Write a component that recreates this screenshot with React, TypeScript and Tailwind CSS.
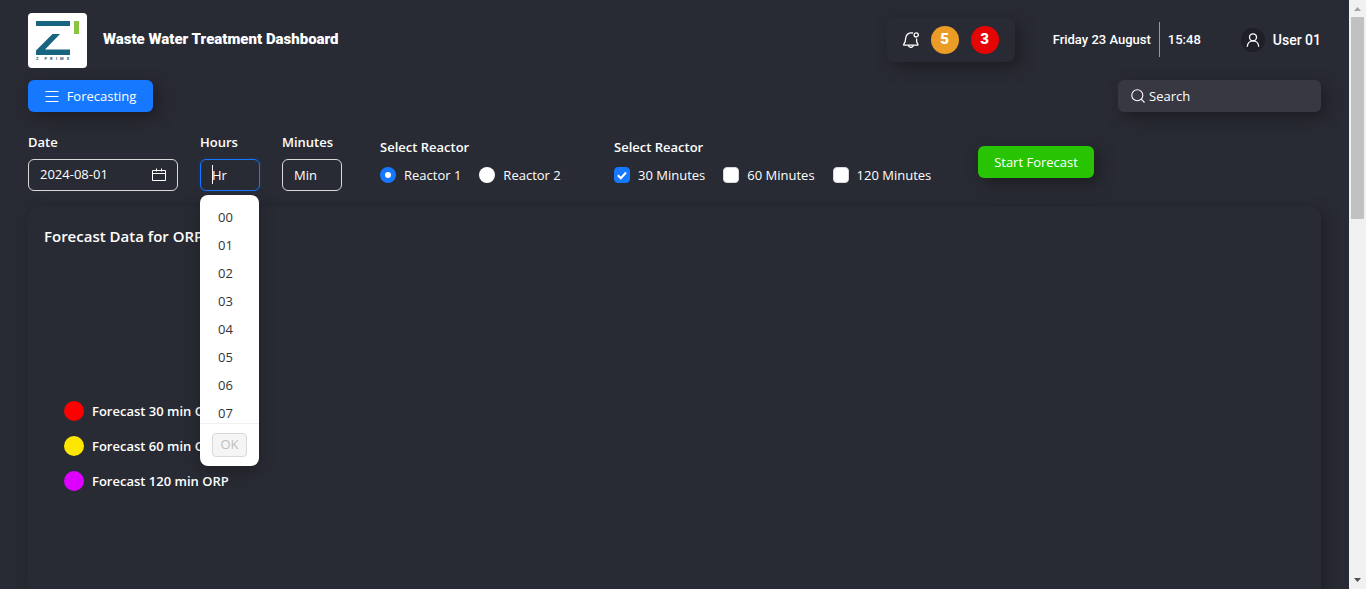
import { useState } from "react";

const hours = ["00", "01", "02", "03", "04", "05", "06", "07"];

const legend = [
  { label: "Forecast 30 min ORP", dot: "bg-[#ff0000]" },
  { label: "Forecast 60 min ORP", dot: "bg-[#ffe600]" },
  { label: "Forecast 120 min ORP", dot: "bg-[#dd00ff]" },
];

const softShadow = "shadow-[5px_5px_15px_rgba(28,28,32,0.9)]";

function Logo() {
  return (
    <div className="h-[55px] w-[59px] rounded bg-white">
      <svg viewBox="0 0 59 55" className="h-full w-full" role="img" aria-label="Z Prime">
        <path fill="#17657f" d="M8 8h34v5H8zM24.500 21H32L17 36.500h25V42H8v-4.500z" />
        <path fill="#8bc540" d="M46 8h5v13h-5z" />
        <text y="47" fill="#17657f" fontSize="4" fontWeight="800">
          <tspan x="8">Z</tspan>
          <tspan x="16.500">P</tspan>
          <tspan x="22">R</tspan>
          <tspan x="28">I</tspan>
          <tspan x="32">M</tspan>
          <tspan x="39">E</tspan>
        </text>
      </svg>
    </div>
  );
}

function MenuIcon() {
  return (
    <svg viewBox="0 0 14 14" className="size-3.5 shrink-0" fill="none" stroke="currentColor">
      <path d="M.5 2.500h13M.5 7.500h13M.5 12.500h13" />
    </svg>
  );
}

function SearchIcon() {
  return (
    <svg viewBox="0 0 14 14" className="size-3.5 shrink-0" fill="none" stroke="currentColor" strokeWidth="1.100">
      <circle cx="6.300" cy="6.300" r="5.500" />
      <path d="M10.200 10.200l3.300 3.300" />
    </svg>
  );
}

function CalendarIcon() {
  return (
    <svg viewBox="0 0 14 14" className="size-3.5 shrink-0" fill="none" stroke="currentColor">
      <path d="M.5 2.500h13v10H.5zM.5 5.500h13M4.500 .5v3M9.500 .5v3" />
    </svg>
  );
}

function BellIcon() {
  return (
    <svg viewBox="0 0 16 16" className="size-4" fill="none" stroke="currentColor" strokeWidth="1.300">
      <path d="M10 1C6 .2 3 2.400 2.700 6L2.200 9.500.8 12.200v.9h14v-.9L13.600 9.500V6.500" />
      <circle cx="13.200" cy="2.900" r="2.100" />
      <path d="M5.300 13.200c.3 1.500 1.300 2.200 2.600 2.200s2.300-.7 2.600-2.200" />
    </svg>
  );
}

function UserIcon() {
  return (
    <svg viewBox="0 0 14 14" className="size-3.5" fill="none" stroke="currentColor" strokeWidth="1.300">
      <circle cx="7" cy="4.300" r="3.500" />
      <path d="M1.300 13.800C1.400 10.200 3.800 7.900 7 7.900s5.600 2.300 5.700 5.900" />
    </svg>
  );
}

function Header() {
  return (
    <header className="flex items-center justify-between font-['Roboto',sans-serif]">
      <div className="flex items-center gap-4">
        <Logo />
        <h1 className="pb-0.5 text-[15px] font-black">Waste Water Treatment Dashboard</h1>
      </div>
      <div className="flex items-center pb-0.5">
        <div className={`mr-[38px] flex items-center gap-3 rounded-lg px-4 py-2 ${softShadow}`}>
          <button type="button" aria-label="Notifications">
            <BellIcon />
          </button>
          <span className="flex size-7 items-center justify-center rounded-full bg-[#eb9c27] text-[15px] font-black">5</span>
          <span className="flex size-7 items-center justify-center rounded-full bg-[#e60505] text-[15px] font-black">3</span>
        </div>
        <div className="mr-10 flex items-center text-[13px] font-medium">
          <span className="pr-2">Friday 23 August</span>
          <span className="flex h-[35px] items-center border-l border-[#999] pl-2">15:48</span>
        </div>
        <div className="flex items-center gap-2 text-sm font-medium">
          <span className="flex size-6 items-center justify-center rounded-full bg-[#1e1f27]">
            <UserIcon />
          </span>
          User 01
        </div>
      </div>
    </header>
  );
}

function HourField() {
  const [hour, setHour] = useState("");
  return (
    <div className="relative flex flex-col gap-[7px]">
      <label htmlFor="hours" className="font-semibold leading-5">Hours</label>
      <input
        id="hours"
        value={hour}
        onChange={(e) => setHour(e.target.value)}
        placeholder="Hr"
        className="h-8 w-[60px] rounded-md border border-[#1677ff] px-[11px] caret-transparent shadow-[0_0_0_2px_rgba(5,80,200,0.1)] outline-none placeholder:text-white"
      />
      <span className="absolute left-3 top-[33px] h-[19px] w-px bg-white" />
      <div className="absolute left-0 top-[63px] z-10 w-[59px] rounded-lg bg-white pt-2 text-[#333] shadow-[0_6px_16px_rgba(0,0,0,0.25)]">
        <ul className="h-[220px] overflow-hidden">
          {hours.map((h) => (
            <li key={h}>
              <button type="button" onClick={() => setHour(h)} className="block h-7 w-full pl-[18px] pt-0.5 text-left">
                {h}
              </button>
            </li>
          ))}
        </ul>
        <div className="flex h-[43px] items-center border-t border-[#f0f0f0] px-3">
          <button type="button" disabled className="h-6 w-[35px] rounded border border-[#d9d9d9] bg-[#f5f5f5] text-[#bfbfbf]">
            OK
          </button>
        </div>
      </div>
    </div>
  );
}

function Filters() {
  const [reactor, setReactor] = useState("Reactor 1");
  const [spans, setSpans] = useState(["30 Minutes"]);
  const toggle = (s: string) =>
    setSpans((prev) => (prev.includes(s) ? prev.filter((p) => p !== s) : [...prev, s]));

  return (
    <section className="flex items-start pt-5">
      <div className="flex gap-[22px]">
        <div className="flex flex-col gap-[7px]">
          <label htmlFor="date" className="font-semibold leading-5">Date</label>
          <div className="flex h-8 w-[150px] items-center rounded-md border border-[#d9d9d9] px-[11px]">
            <input id="date" defaultValue="2024-08-01" className="w-full min-w-0 outline-none" />
            <CalendarIcon />
          </div>
        </div>
        <HourField />
        <div className="flex flex-col gap-[7px]">
          <label htmlFor="minutes" className="font-semibold leading-5">Minutes</label>
          <input
            id="minutes"
            placeholder="Min"
            className="h-8 w-[60px] rounded-md border border-[#d9d9d9] px-[11px] outline-none placeholder:text-white"
          />
        </div>
      </div>

      <fieldset className="ml-[38px] w-[234px] pt-[5px]">
        <legend className="contents font-semibold">
          <span className="block leading-5">Select Reactor</span>
        </legend>
        <div className="mt-2 flex gap-[18px]">
          {["Reactor 1", "Reactor 2"].map((r) => (
            <label key={r} className="flex items-center gap-2 leading-5">
              <input
                type="radio"
                name="reactor"
                checked={reactor === r}
                onChange={() => setReactor(r)}
                className="size-4 appearance-none rounded-full bg-white checked:border-5 checked:border-[#1677ff]"
              />
              {r}
            </label>
          ))}
        </div>
      </fieldset>

      <fieldset className="w-[364px] pt-[5px]">
        <legend className="contents font-semibold">
          <span className="block leading-5">Select Reactor</span>
        </legend>
        <div className="mt-2 flex gap-[18px]">
          {["30 Minutes", "60 Minutes", "120 Minutes"].map((s) => (
            <label key={s} className="flex items-center gap-2 leading-5">
              <span className="grid size-4">
                <input
                  type="checkbox"
                  checked={spans.includes(s)}
                  onChange={() => toggle(s)}
                  className="col-start-1 row-start-1 size-4 appearance-none rounded border border-[#d9d9d9] bg-white checked:border-[#1677ff] checked:bg-[#1677ff]"
                />
                <svg viewBox="0 0 16 16" className="pointer-events-none col-start-1 row-start-1 size-4">
                  <path d="M3.800 8.200l3 3L12 5.500" fill="none" stroke="#fff" strokeWidth="2" />
                </svg>
              </span>
              {s}
            </label>
          ))}
        </div>
      </fieldset>

      <button type="button" className={`mt-3.5 h-8 w-[116px] rounded-md bg-[#28c404] pt-0.5 ${softShadow}`}>
        Start Forecast
      </button>
    </section>
  );
}

function Scrollbar() {
  return (
    <div className="flex w-[17px] shrink-0 flex-col items-center justify-between bg-[#f1f1f1]" aria-hidden="true">
      <div className="flex flex-col items-center">
        <svg viewBox="0 0 17 17" className="size-[17px]">
          <path d="M5 11h7L8.500 7z" fill="#a3a3a3" />
        </svg>
        <div className="h-[202px] w-[13px] bg-[#c1c1c1]" />
      </div>
      <svg viewBox="0 0 17 17" className="size-[17px]">
        <path d="M5 6h7L8.500 10z" fill="#505050" />
      </svg>
    </div>
  );
}

export default function App() {
  return (
    <div className="flex h-screen overflow-hidden bg-[#292b34] font-['Segoe_UI','Open_Sans',sans-serif] text-[13px] text-white">
      <main className="flex min-w-0 flex-1 flex-col px-7 pt-[13px]">
        <Header />
        <div className="mt-3 flex items-center justify-between">
          <button
            type="button"
            className={`flex h-8 w-[125px] items-center justify-center gap-2 rounded-md bg-[#1677ff] ${softShadow}`}
          >
            <MenuIcon />
            <span className="pt-0.5">Forecasting</span>
          </button>
          <label className={`flex h-8 w-[203px] items-center gap-1 rounded-md bg-[#383843] px-[13px] ${softShadow}`}>
            <SearchIcon />
            <input
              type="text"
              aria-label="Search"
              placeholder="Search"
              className="w-full min-w-0 pt-0.5 outline-none placeholder:text-white"
            />
          </label>
        </div>
        <Filters />
        <section className="mt-4 flex-1 rounded-t-[10px] px-4 pt-[17px] shadow-[4px_4px_14px_rgba(28,28,32,0.8)]">
          <h2 className="text-[15px] font-semibold leading-6">Forecast Data for ORP</h2>
          <ul className="mt-[153px] flex flex-col gap-[15px] pl-5">
            {legend.map((item) => (
              <li key={item.label} className="flex items-center gap-2 font-semibold leading-5">
                <span className={`size-5 rounded-full ${item.dot}`} />
                {item.label}
              </li>
            ))}
          </ul>
        </section>
      </main>
      <Scrollbar />
    </div>
  );
}
